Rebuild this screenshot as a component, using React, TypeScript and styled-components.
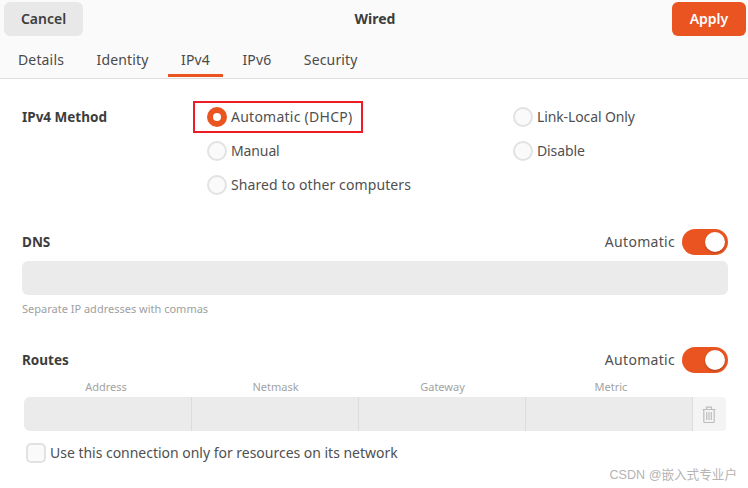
import React from "react";
import styled, { createGlobalStyle } from "styled-components";

const GlobalStyle = createGlobalStyle`
  html, body {
    margin: 0;
    padding: 0;
    background: #ffffff;
  }
  body {
    font-family: "Noto Sans", "Open Sans", sans-serif;
    color: #3d3d3d;
  }
`;

const Window = styled.div`
  position: relative;
  width: 748px;
  height: 488px;
  overflow: hidden;
  background: #ffffff;
`;

const HeaderBar = styled.header`
  height: 78px;
  box-sizing: content-box;
  background: #fafafa;
  border-bottom: 1px solid #dedede;
  display: flex;
  flex-direction: column;
`;

const TitleRow = styled.div`
  display: flex;
  align-items: flex-start;
  justify-content: space-between;
  padding: 2px 2px 0 4px;
  height: 36px;
`;

const Title = styled.div`
  font-size: 14px;
  font-weight: 700;
  line-height: 34px;
  margin-right: 5px;
`;

const HeadButton = styled.button<{ $primary?: boolean }>`
  height: 34px;
  width: ${(p) => (p.$primary ? "74px" : "79px")};
  border: 0;
  border-radius: 6px;
  font-family: inherit;
  font-size: 14px;
  font-weight: 600;
  padding: 0 0 2px;
  background: ${(p) => (p.$primary ? "#e95420" : "#e8e8e8")};
  color: ${(p) => (p.$primary ? "#ffffff" : "#3d3d3d")};
`;

const Tabs = styled.nav`
  display: flex;
  gap: 6.5px;
  padding-left: 5px;
  height: 42px;
`;

const Tab = styled.div<{ $active?: boolean }>`
  box-sizing: border-box;
  height: 40px;
  padding: 12px 13px 0;
  font-size: 14px;
  line-height: 22px;
  letter-spacing: 0.15px;
  color: #4a4a4a;
  border-bottom: 3px solid ${(p) => (p.$active ? "#e95420" : "transparent")};
`;

const Content = styled.main`
  padding: 28px 20px 0 22px;
`;

const MethodSection = styled.section`
  display: grid;
  grid-template-columns: 185px 306px 1fr;
  grid-auto-rows: 34px;
`;

const SectionLabel = styled.div`
  font-size: 13.5px;
  font-weight: 700;
  line-height: 20px;
`;

const MethodLabel = styled(SectionLabel)`
  grid-row: 1;
  grid-column: 1;
`;

const RadioOption = styled.label<{ $col: number; $row: number }>`
  grid-column: ${(p) => p.$col};
  grid-row: ${(p) => p.$row};
  display: flex;
  align-items: center;
  gap: 4px;
  height: 20px;
  font-size: 14px;
  color: #505050;
  position: relative;
  white-space: nowrap;
`;

const RadioText = styled.span<{ $track: number }>`
  letter-spacing: ${(p) => p.$track}px;
  margin-top: -2px;
`;

const HighlightBox = styled.span`
  position: absolute;
  left: -14px;
  top: -6px;
  width: 170px;
  height: 32px;
  box-sizing: border-box;
  border: 2px solid #ee1c25;
`;

const RadioDot = styled.span<{ $checked?: boolean }>`
  box-sizing: border-box;
  width: 20px;
  height: 20px;
  border-radius: 50%;
  flex: none;
  display: flex;
  align-items: center;
  justify-content: center;
  background: ${(p) => (p.$checked ? "#e95420" : "#fafafa")};
  border: ${(p) => (p.$checked ? "0" : "2px solid #e2e2e2")};

  &::after {
    content: "";
    display: ${(p) => (p.$checked ? "block" : "none")};
    width: 8px;
    height: 8px;
    border-radius: 50%;
    background: #ffffff;
  }
`;

const SectionHead = styled.div`
  display: flex;
  align-items: center;
  justify-content: space-between;
  height: 26px;
`;

const AutoGroup = styled.div`
  display: flex;
  align-items: center;
  gap: 7px;
  font-size: 14px;
  letter-spacing: 0.3px;
  color: #505050;
`;

const AutoText = styled.span`
  margin-top: -2px;
`;

const Toggle = styled.span`
  box-sizing: border-box;
  width: 46px;
  height: 26px;
  border-radius: 13px;
  background: #e95420;
  padding: 3px;
  display: flex;
  justify-content: flex-end;

  &::after {
    content: "";
    width: 20px;
    height: 20px;
    border-radius: 50%;
    background: #ffffff;
    box-shadow: 0 1px 2px rgba(0, 0, 0, 0.25);
  }
`;

const DnsSection = styled.section`
  margin-top: 20px;
`;

const TextField = styled.div`
  height: 34px;
  margin-top: 6px;
  border-radius: 6px;
  background: #ebebeb;
`;

const Hint = styled.div`
  margin-top: 6px;
  font-size: 11px;
  line-height: 15px;
  color: #a0a0a0;
`;

const RoutesSection = styled.section`
  margin-top: 31px;
`;

const ColumnHeads = styled.div`
  display: grid;
  grid-template-columns: 168px repeat(3, 167px);
  margin: 6px 0 0 2px;
  height: 18px;
`;

const ColumnHead = styled.div`
  text-align: center;
  font-size: 11px;
  line-height: 16px;
  color: #a3a3a3;

  &:first-child {
    padding-right: 4px;
  }

  &:last-child {
    padding-left: 3px;
  }
`;

const RouteRow = styled.div`
  display: grid;
  grid-template-columns: 168px repeat(3, 167px) 33px;
  height: 34px;
  margin: 0 0 0 2px;
  border-radius: 6px;
  overflow: hidden;
`;

const RouteCell = styled.div`
  background: #ebebeb;
  border-right: 1px solid #dcdcdc;
`;

const DeleteCell = styled.div`
  background: #f4f4f4;
  display: flex;
  align-items: center;
  justify-content: center;
  padding-right: 2px;
  color: #bdbdbd;
`;

const CheckRow = styled.label`
  display: flex;
  align-items: center;
  gap: 4px;
  margin: 12px 0 0 4px;
  height: 20px;
  font-size: 14px;
  letter-spacing: -0.02px;
  color: #505050;
`;

const CheckText = styled.span`
  margin-top: -2px;
`;

const CheckBox = styled.span`
  box-sizing: border-box;
  width: 20px;
  height: 20px;
  flex: none;
  border-radius: 5px;
  border: 2px solid #e2e2e2;
  background: #fafafa;
`;

const Watermark = styled.div`
  position: absolute;
  right: 11px;
  bottom: 5px;
  font-family: "Liberation Sans", "Noto Sans CJK SC", sans-serif;
  font-size: 12.6px;
  line-height: 16px;
  color: #b4b4b4;
`;

const TrashIcon = () => (
  <svg width="14" height="17" viewBox="0 0 14 17" fill="none" stroke="currentColor" strokeWidth="1.2">
    <path d="M0.5 3.5h13" />
    <path d="M4.5 3V1.2h5V3" />
    <path d="M1.8 3.5v12a1 1 0 0 0 1 1h8.4a1 1 0 0 0 1-1v-12" />
    <path d="M4.7 6v8M7 6v8M9.3 6v8" />
  </svg>
);

const App: React.FC = () => {
  return (
    <Window>
      <GlobalStyle />
      <HeaderBar>
        <TitleRow>
          <HeadButton>Cancel</HeadButton>
          <Title>Wired</Title>
          <HeadButton $primary>Apply</HeadButton>
        </TitleRow>
        <Tabs>
          <Tab>Details</Tab>
          <Tab>Identity</Tab>
          <Tab $active>IPv4</Tab>
          <Tab>IPv6</Tab>
          <Tab>Security</Tab>
        </Tabs>
      </HeaderBar>
      <Content>
        <MethodSection>
          <MethodLabel>IPv4 Method</MethodLabel>
          <RadioOption $col={2} $row={1}>
            <HighlightBox />
            <RadioDot $checked />
            <RadioText $track={0.25}>Automatic (DHCP)</RadioText>
          </RadioOption>
          <RadioOption $col={3} $row={1}>
            <RadioDot />
            <RadioText $track={-0.12}>Link-Local Only</RadioText>
          </RadioOption>
          <RadioOption $col={2} $row={2}>
            <RadioDot />
            <RadioText $track={-0.12}>Manual</RadioText>
          </RadioOption>
          <RadioOption $col={3} $row={2}>
            <RadioDot />
            <RadioText $track={-0.12}>Disable</RadioText>
          </RadioOption>
          <RadioOption $col={2} $row={3}>
            <RadioDot />
            <RadioText $track={0.1}>Shared to other computers</RadioText>
          </RadioOption>
        </MethodSection>
        <DnsSection>
          <SectionHead>
            <SectionLabel>DNS</SectionLabel>
            <AutoGroup>
              <AutoText>Automatic</AutoText>
              <Toggle />
            </AutoGroup>
          </SectionHead>
          <TextField />
          <Hint>Separate IP addresses with commas</Hint>
        </DnsSection>
        <RoutesSection>
          <SectionHead>
            <SectionLabel>Routes</SectionLabel>
            <AutoGroup>
              <AutoText>Automatic</AutoText>
              <Toggle />
            </AutoGroup>
          </SectionHead>
          <ColumnHeads>
            <ColumnHead>Address</ColumnHead>
            <ColumnHead>Netmask</ColumnHead>
            <ColumnHead>Gateway</ColumnHead>
            <ColumnHead>Metric</ColumnHead>
          </ColumnHeads>
          <RouteRow>
            <RouteCell />
            <RouteCell />
            <RouteCell />
            <RouteCell />
            <DeleteCell>
              <TrashIcon />
            </DeleteCell>
          </RouteRow>
          <CheckRow>
            <CheckBox />
            <CheckText>Use this connection only for resources on its network</CheckText>
          </CheckRow>
        </RoutesSection>
      </Content>
      <Watermark>CSDN @嵌入式专业户</Watermark>
    </Window>
  );
};

export default App;
